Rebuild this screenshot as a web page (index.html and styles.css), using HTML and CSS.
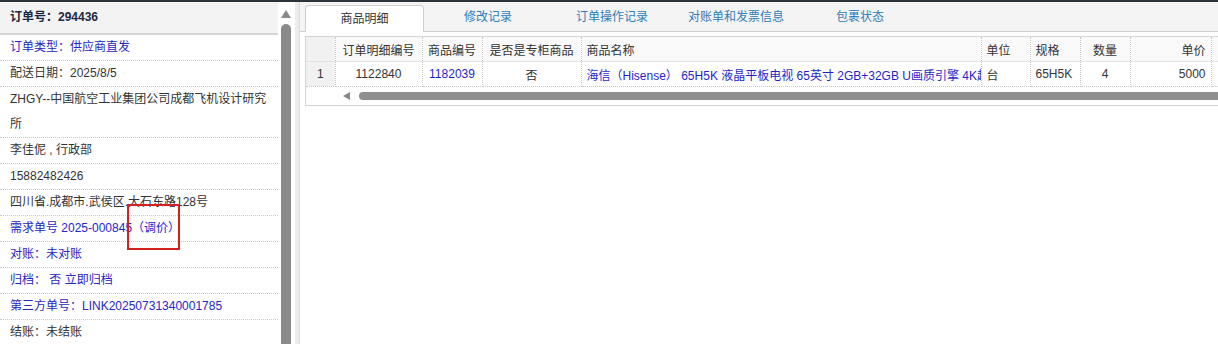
FILE: index.html
```html
<!DOCTYPE html>
<html lang="zh-CN">
<head>
  <meta charset="UTF-8">
  <meta name="viewport" content="width=device-width, initial-scale=1.0">
  <title>订单详情</title>
  <link rel="stylesheet" href="styles.css">
</head>
<body>
  <div class="topbar"></div>
  <div class="main">
    <!-- Ліва панель з інформацією про замовлення -->
    <div class="side">
      <div class="info">
        <div class="info-head">订单号：294436</div>
        <div class="info-row blue">订单类型：供应商直发</div>
        <div class="info-row">配送日期：2025/8/5</div>
        <div class="info-row">ZHGY--中国航空工业集团公司成都飞机设计研究所</div>
        <div class="info-row">李佳伲 , 行政部</div>
        <div class="info-row">15882482426</div>
        <div class="info-row">四川省.成都市.武侯区.大石东路128号</div>
        <div class="info-row blue">需求单号 2025-000845（调价）</div>
        <div class="info-row blue">对账：未对账</div>
        <div class="info-row blue">归档：&nbsp;否 立即归档</div>
        <div class="info-row blue">第三方单号：LINK20250731340001785</div>
        <div class="info-row">结账：未结账</div>
      </div>
      <div class="vscroll">
        <span class="arrow-up"></span>
        <span class="vthumb"></span>
      </div>
      <div class="splitter"></div>
    </div>

    <!-- Права панель з вкладками -->
    <div class="content">
      <div class="tabs">
        <div class="tab active">商品明细</div>
        <div class="tab">修改记录</div>
        <div class="tab">订单操作记录</div>
        <div class="tab">对账单和发票信息</div>
        <div class="tab">包裹状态</div>
      </div>
      <div class="grid">
        <table class="grid-table">
          <colgroup>
            <col style="width: 29px">
            <col style="width: 87px">
            <col style="width: 60px">
            <col style="width: 99px">
            <col style="width: 400px">
            <col style="width: 49px">
            <col style="width: 50px">
            <col style="width: 50px">
            <col style="width: 81px">
            <col style="width: 80px">
          </colgroup>
          <thead>
            <tr>
              <th class="rn"></th>
              <th class="c">订单明细编号</th>
              <th class="c">商品编号</th>
              <th class="c">是否是专柜商品</th>
              <th>商品名称</th>
              <th>单位</th>
              <th>规格</th>
              <th class="c">数量</th>
              <th class="r">单价</th>
              <th></th>
            </tr>
          </thead>
          <tbody>
            <tr>
              <td class="rn">1</td>
              <td class="c">1122840</td>
              <td class="c link">1182039</td>
              <td class="c">否</td>
              <td class="link">海信（Hisense） 65H5K 液晶平板电视 65英寸 2GB+32GB U画质引擎 4K超</td>
              <td>台</td>
              <td>65H5K</td>
              <td class="c">4</td>
              <td class="r">5000</td>
              <td></td>
            </tr>
          </tbody>
        </table>
        <div class="hscroll">
          <span class="arrow-left"></span>
          <span class="hthumb"></span>
        </div>
      </div>
    </div>

    <!-- Червона рамка-позначка -->
    <div class="mark"></div>
  </div>
</body>
</html>
```

FILE: styles.css
```css
/* Загальні стилі */
html, body {
  margin: 0;
  padding: 0;
  height: 100%;
  overflow: hidden;
  background: #fff;
  font-family: "Liberation Sans", "Noto Sans CJK SC", sans-serif;
  font-size: 12px;
  color: #333;
}

.topbar {
  height: 2px;
  background: #2d333b;
}

.main {
  position: relative;
  display: flex;
  height: 342px;
  overflow: hidden;
}

/* Ліва панель */
.side {
  display: flex;
  flex: 0 0 300px;
}

.info {
  width: 278px;
}

.info-head {
  height: 31px;
  line-height: 31px;
  padding-left: 10px;
  background: #f3f3f3;
  border-bottom: 2px solid #d6d6d6;
  font-weight: bold;
  color: #1d2940;
}

.info-row {
  line-height: 25px;
  padding-left: 10px;
  padding-right: 6px;
  border-bottom: 1px dotted #c8c8c8;
}

.blue {
  color: #2626c4;
}

/* Вертикальна смуга прокрутки */
.vscroll {
  display: flex;
  flex-direction: column;
  align-items: center;
  width: 15px;
}

.arrow-up {
  margin-top: 8px;
  width: 0;
  height: 0;
  border-left: 5px solid transparent;
  border-right: 5px solid transparent;
  border-bottom: 8px solid #888;
}

.vthumb {
  margin-top: 6px;
  width: 10px;
  flex-grow: 1;
  background: #8a8a8a;
  border-radius: 5px 5px 0 0;
}

.splitter {
  width: 4px;
  margin-left: 2px;
  background: #ececec;
  border-right: 1px solid #dcdcdc;
}

/* Права панель */
.content {
  flex-grow: 1;
  min-width: 0;
}

.tabs {
  display: flex;
  gap: 4px;
  height: 26px;
  padding: 3px 0 0 5px;
  background: #f4f4f4;
  border-bottom: 1px solid #cfcfcf;
}

.tab {
  width: 120px;
  line-height: 25px;
  text-align: center;
  color: #2f7cb8;
}

.tab.active {
  width: 117px;
  margin-bottom: -1px;
  line-height: 26px;
  background: #fff;
  border: 1px solid #cfcfcf;
  border-bottom: none;
  border-radius: 4px 4px 0 0;
  color: #333;
}

/* Таблиця товарів */
.grid {
  margin: 4px 0 0 5px;
  border: 1px solid #d4d4d4;
  border-right: none;
  overflow: hidden;
}

.grid-table {
  table-layout: fixed;
  border-collapse: collapse;
  width: 985px;
}

.grid-table th,
.grid-table td {
  height: 24px;
  padding: 0 5px;
  font-weight: normal;
  text-align: left;
  white-space: nowrap;
  overflow: hidden;
  border-right: 1px dotted #c8c8c8;
  border-bottom: 1px dotted #c8c8c8;
}

.grid-table th {
  background: #f9f9f9;
  border-bottom: 1px solid #e2e2e2;
}

.grid-table .rn {
  background: #f1f1f1;
  text-align: center;
  padding: 0;
}

.grid-table .c {
  text-align: center;
}

.grid-table .r {
  text-align: right;
}

.grid-table .link {
  color: #1f1fc8;
}

/* Горизонтальна смуга прокрутки */
.hscroll {
  display: flex;
  align-items: center;
  height: 18px;
}

.arrow-left {
  margin-left: 37px;
  width: 0;
  height: 0;
  border-top: 4px solid transparent;
  border-bottom: 4px solid transparent;
  border-right: 7px solid #888;
}

.hthumb {
  margin-left: 9px;
  flex-grow: 1;
  height: 8px;
  background: #8f8f8f;
  border-radius: 4px 0 0 4px;
}

/* Позначка поверх вмісту */
.mark {
  position: absolute;
  left: 127px;
  top: 202px;
  width: 49px;
  height: 42px;
  border: 2px solid #d42020;
}
```
